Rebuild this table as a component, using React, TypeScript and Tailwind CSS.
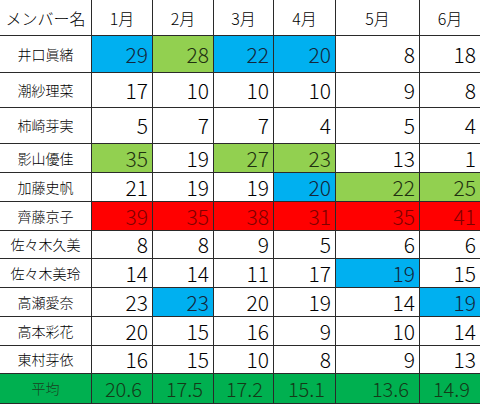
import React from "react";

type Hl = "b" | "g" | "r" | "";
const months = ["1月", "2月", "3月", "4月", "5月", "6月"];
const rows: { name: string; vals: number[]; hl: Hl[]; h: string }[] = [
  { name: "井口眞緒", vals: [29, 28, 22, 20, 8, 18], hl: ["b", "g", "b", "b", "", ""], h: "h-[36px]" },
  { name: "潮紗理菜", vals: [17, 10, 10, 10, 9, 8], hl: ["", "", "", "", "", ""], h: "h-[34px]" },
  { name: "柿崎芽実", vals: [5, 7, 7, 4, 5, 4], hl: ["", "", "", "", "", ""], h: "h-[35px]" },
  { name: "影山優佳", vals: [35, 19, 27, 23, 13, 1], hl: ["g", "", "g", "g", "", ""], h: "h-[28px]" },
  { name: "加藤史帆", vals: [21, 19, 19, 20, 22, 25], hl: ["", "", "", "b", "g", "g"], h: "h-[28px]" },
  { name: "齊藤京子", vals: [39, 35, 38, 31, 35, 41], hl: ["r", "r", "r", "r", "r", "r"], h: "h-[28px]" },
  { name: "佐々木久美", vals: [8, 8, 9, 5, 6, 6], hl: ["", "", "", "", "", ""], h: "h-[27px]" },
  { name: "佐々木美玲", vals: [14, 14, 11, 17, 19, 15], hl: ["", "", "", "", "b", ""], h: "h-[28px]" },
  { name: "高瀬愛奈", vals: [23, 23, 20, 19, 14, 19], hl: ["", "b", "", "", "", "b"], h: "h-[28px]" },
  { name: "高本彩花", vals: [20, 15, 16, 9, 10, 14], hl: ["", "", "", "", "", ""], h: "h-[28px]" },
  { name: "東村芽依", vals: [16, 15, 10, 8, 9, 13], hl: ["", "", "", "", "", ""], h: "h-[27px]" },
];
const avg = ["20.6", "17.5", "17.2", "15.1", "13.6", "14.9"];

const cellCls: Record<Hl, string> = {
  b: "bg-[#00b0f0] text-[#14263a]",
  g: "bg-[#92d050] text-[#1f3110]",
  r: "bg-[#ff0000] text-[#800000]",
  "": "bg-white text-black",
};

export default function App() {
  return (
    <div
      className="w-[480px] h-[404px] bg-[#2a2a2a] pb-px overflow-hidden"
      style={{ fontFamily: '"Noto Sans CJK JP", "Noto Sans", sans-serif' }}
    >
      <div className="grid grid-cols-[91px_60px_60px_59px_61px_83px_60px] gap-px font-light">
        <div className="h-[35px] bg-white flex items-center justify-center text-[16px] text-black">
          メンバー名
        </div>
        {months.map((m) => (
          <div key={m} className="h-[35px] bg-white flex items-center justify-center text-[16px] text-black">
            {m}
          </div>
        ))}
        {rows.map((r) => (
          <React.Fragment key={r.name}>
            <div className={`${r.h} bg-white flex items-center justify-center text-[14px] text-black`}>
              {r.name}
            </div>
            {r.vals.map((v, i) => (
              <div
                key={i}
                className={`${r.h} ${cellCls[r.hl[i]]} flex items-center justify-end pr-[4px] text-[21px] leading-none`}
              >
                {v}
              </div>
            ))}
          </React.Fragment>
        ))}
        <div className="h-[29px] bg-[#00b050] flex items-center justify-center text-[14px] text-[#1a4020]">
          平均
        </div>
        {avg.map((a, i) => (
          <div
            key={i}
            className="h-[29px] bg-[#00b050] flex items-center justify-end pr-[10px] text-[20px] leading-none text-[#143a18]"
          >
            {a}
          </div>
        ))}
      </div>
    </div>
  );
}
